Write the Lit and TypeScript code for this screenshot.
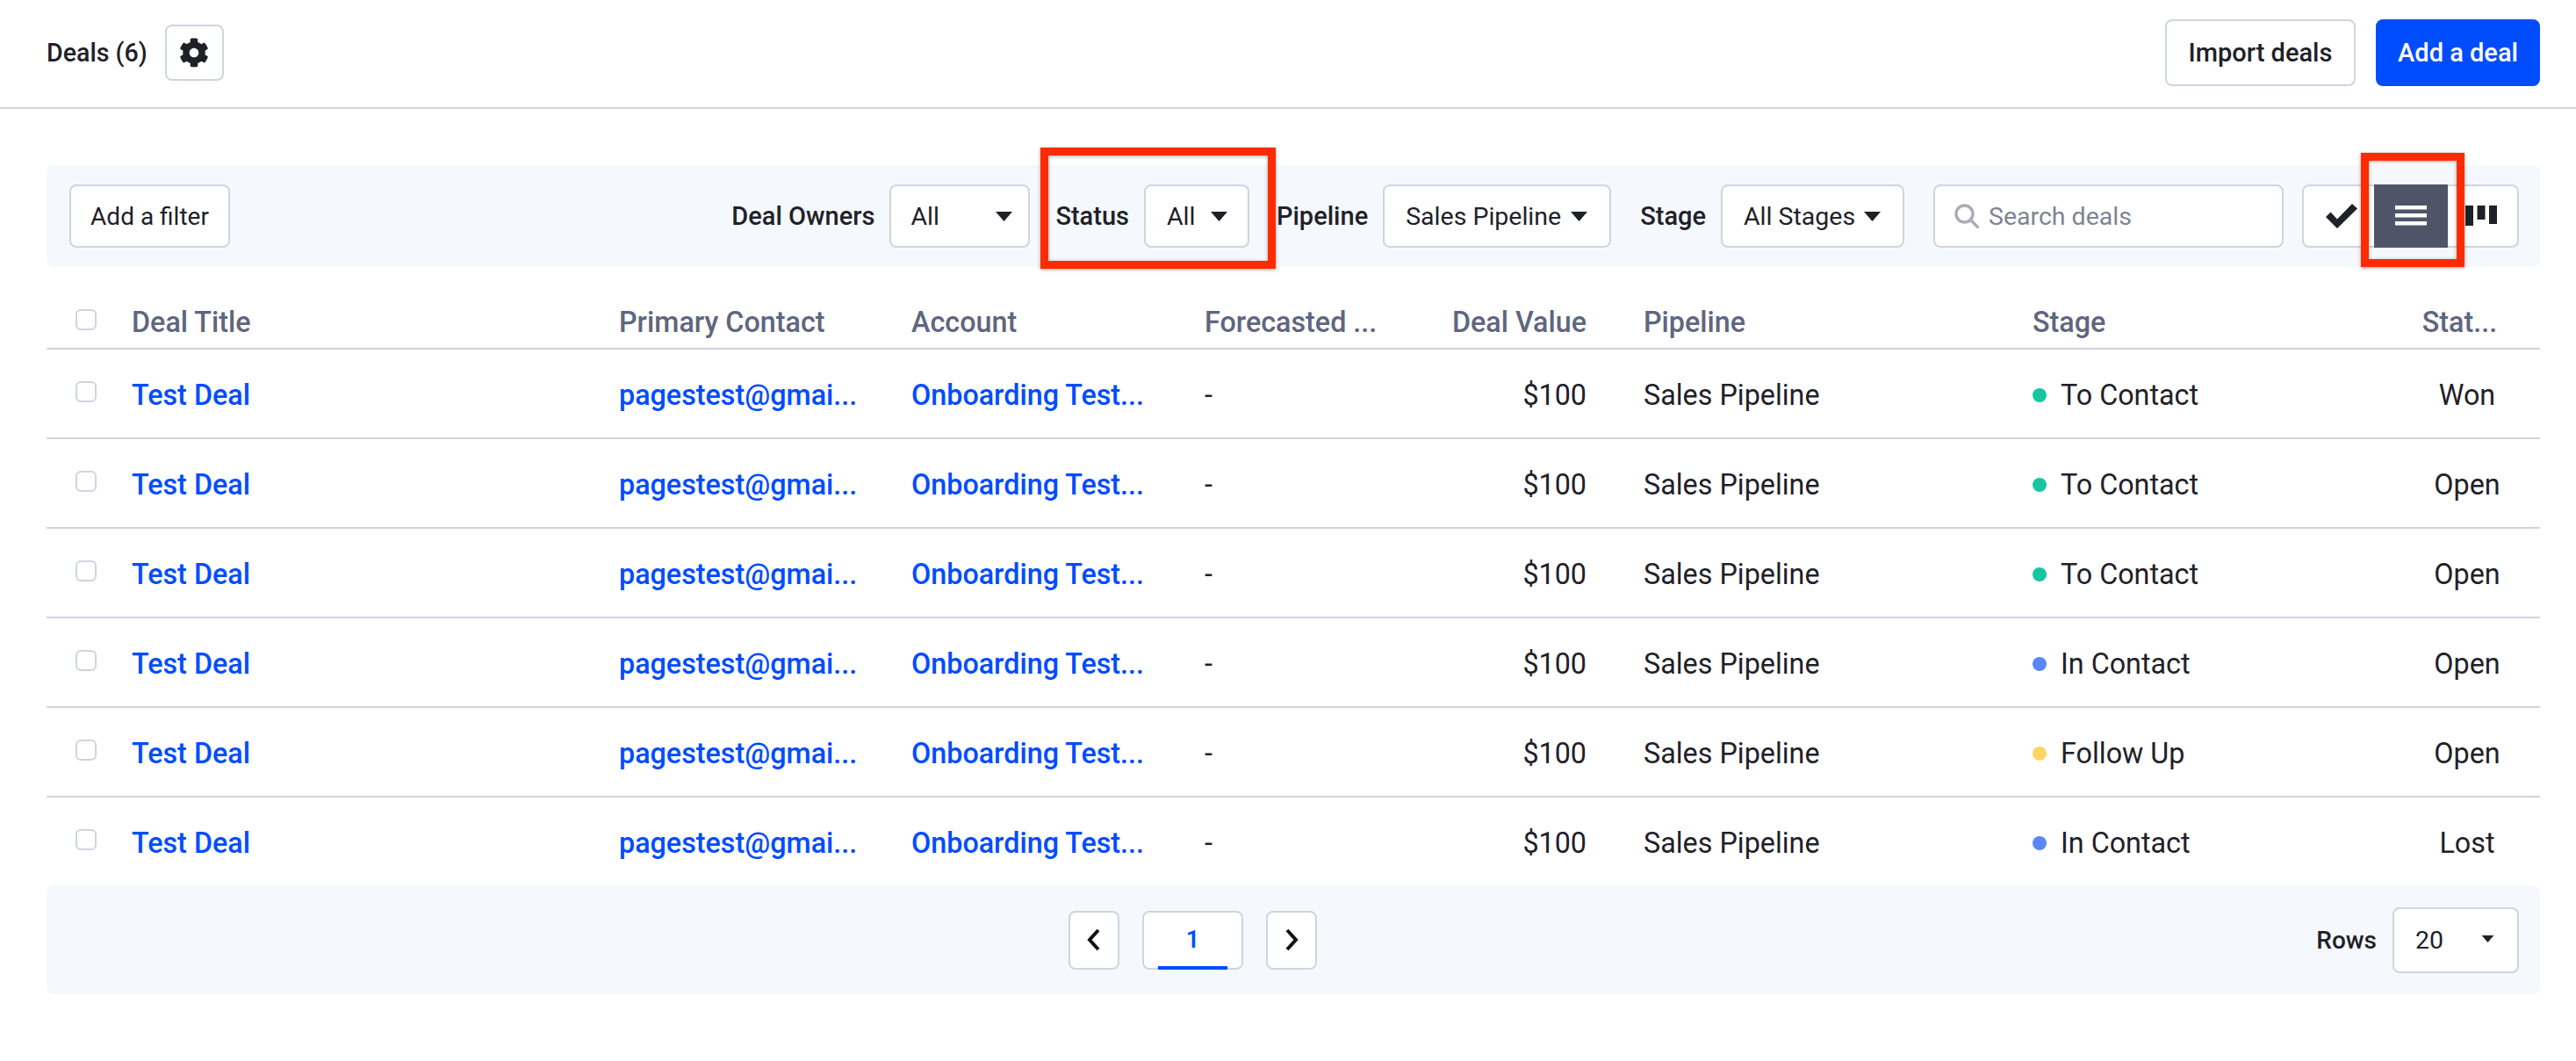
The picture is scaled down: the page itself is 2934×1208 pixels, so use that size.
import { LitElement, html, css, svg } from "lit";
import { customElement } from "lit/decorators.js";

const COG = "M487.4 315.7l-42.6-24.6c4.3-23.2 4.3-47 0-70.2l42.6-24.6c4.9-2.8 7.1-8.6 5.5-14-11.1-35.6-30-67.8-54.7-94.6-3.8-4.1-10-5.1-14.8-2.3L380.8 110c-17.9-15.4-38.5-27.3-60.8-35.1V25.8c0-5.6-3.9-10.5-9.4-11.7-36.7-8.2-74.3-7.8-109.2 0-5.5 1.2-9.4 6.1-9.4 11.7V75c-22.2 7.9-42.8 19.8-60.8 35.1L88.7 85.5c-4.9-2.8-11-1.9-14.8 2.3-24.7 26.7-43.6 58.9-54.7 94.6-1.7 5.4.6 11.2 5.5 14L67.3 221c-4.3 23.2-4.3 47 0 70.2l-42.6 24.6c-4.9 2.8-7.1 8.6-5.5 14 11.1 35.6 30 67.8 54.7 94.6 3.8 4.1 10 5.1 14.8 2.3l42.6-24.6c17.9 15.4 38.5 27.3 60.8 35.1v49.2c0 5.6 3.9 10.5 9.4 11.7 36.7 8.2 74.3 7.8 109.2 0 5.5-1.2 9.4-6.1 9.4-11.7v-49.2c22.2-7.9 42.8-19.8 60.8-35.1l42.6 24.6c4.9 2.8 11 1.9 14.8-2.3 24.7-26.7 43.6-58.9 54.7-94.6 1.5-5.5-.7-11.3-5.6-14.1zM256 336c-44.1 0-80-35.9-80-80s35.9-80 80-80 80 35.9 80 80-35.9 80-80 80z";

const caret = svg`<svg class="caret" viewBox="0 0 19 11"><path d="M0 0h19L9.5 11z" fill="#1f2129"/></svg>`;

type Deal = { stage: string; dot: string; status: string };
const DEALS: Deal[] = [
  { stage: "To Contact", dot: "green", status: "Won" },
  { stage: "To Contact", dot: "green", status: "Open" },
  { stage: "To Contact", dot: "green", status: "Open" },
  { stage: "In Contact", dot: "blue", status: "Open" },
  { stage: "Follow Up", dot: "yellow", status: "Open" },
  { stage: "In Contact", dot: "blue", status: "Lost" },
];

@customElement("app-root")
export class AppRoot extends LitElement {
  static styles = css`
    :host {
      display: block;
      position: relative;
      width: 100%;
      min-height: 1208px;
      background: #fff;
      color: #1f2129;
      font-family: Roboto, "Liberation Sans", sans-serif;
      font-size: 32.3px;
    }
    * { box-sizing: border-box; }
    .top {
      display: flex;
      align-items: center;
      height: 124px;
      padding: 0 41px 2px 53px;
      border-bottom: 2px solid #cfd4e0;
    }
    .title { font-size: 28.6px; font-weight: 500; margin-right: 20px; }
    .btn {
      display: flex;
      align-items: center;
      justify-content: center;
      background: #fff;
      border: 2px solid #cfd4e0;
      border-radius: 8px;
      font-size: 28px;
      white-space: nowrap;
      color: #1f2129;
    }
    .gear { width: 67px; height: 64px; }
    .gear svg { width: 34px; height: 34px; fill: #1f2129; }
    .spacer { flex: 1; }
    .import { width: 217px; height: 76px; font-weight: 500; margin-right: 23px; font-size: 29px; }
    .add { width: 187px; height: 76px; font-weight: 500; background: #004cff; border-color: #004cff; color: #fff; font-size: 29px; }
    main { padding: 64px 41px 0 53px; }
    .bar {
      display: flex;
      align-items: center;
      height: 116px;
      padding: 0 24px 0 26px;
      background: #f5f8fd;
      border-radius: 8px;
    }
    .filter { width: 183px; height: 72px; }
    .label { font-size: 29px; font-weight: 500; white-space: nowrap; margin-right: 17px; }
    .select {
      display: flex;
      align-items: center;
      height: 72px;
      padding: 0 25px 0 24px;
      background: #fff;
      border: 2px solid #cfd4e0;
      border-radius: 8px;
      font-size: 28.5px;
      white-space: nowrap;
      margin-right: 33px;
    }
    .select span { flex: 1; }
    .caret { width: 19px; height: 11px; flex: none; }
    .w-owner { width: 160px; padding: 0 18px 0 22px; margin-right: 29px; }
    .w-status { width: 120px; padding-right: 23px; margin-right: 31px; }
    .w-pipe { width: 260px; }
    .w-stage { width: 209px; }
    .search {
      display: flex;
      align-items: center;
      width: 399px;
      height: 72px;
      padding-left: 22px;
      background: #fff;
      border: 2px solid #cfd4e0;
      border-radius: 8px;
      color: #7d8494;
      font-size: 28.5px;
      margin-right: 21px;
    }
    .search svg { width: 28px; height: 28px; margin-right: 11px; }
    .toggle {
      display: flex;
      width: 247px;
      height: 72px;
      background: #fff;
      border: 2px solid #cfd4e0;
      border-radius: 8px;
    }
    .cell { display: flex; align-items: center; justify-content: center; }
    .c1 { width: 80px; padding-left: 6px; }
    .c2 { width: 84px; margin: -2px 0; background: #4f5569; }
    .c3 { flex: 1; padding-right: 3px; }
    .c1 svg { width: 36px; height: 28px; }
    .c2 svg, .c3 svg { width: 36px; height: 24px; }
    .row {
      display: grid;
      grid-template-columns: 97px 555px 333px 334px 250px 185px 508px 435px 143px;
      align-items: center;
      border-bottom: 2px solid #cfd4e0;
      height: 102px;
      padding-top: 4px;
    }
    .row > * { white-space: nowrap; }
    .row.head { height: 94px; padding-top: 34px; color: #5f667e; font-weight: 500; }
    .row.last { border-bottom: 0; height: 100px; }
    .check {
      display: block;
      width: 24px;
      height: 24px;
      margin: -9px 0 0 33px;
      background: #fff;
      border: 2px solid #cfd4e0;
      border-radius: 6px;
    }
    .head .check { margin-top: -6px; }
    .link { color: #004cff; font-weight: 500; }
    .right { text-align: right; }
    .pad { padding-left: 65px; }
    .stage { display: flex; align-items: center; }
    .dot { width: 16px; height: 16px; border-radius: 50%; margin-right: 16px; }
    .dot.green { background: #17c69e; }
    .dot.blue { background: #5a87f8; }
    .dot.yellow { background: #fcd565; }
    .status { text-align: center; padding-right: 23px; }
    .head .status { padding-right: 40px; }
    .foot {
      display: flex;
      align-items: center;
      height: 124px;
      padding: 0 24px 0 1164px;
      background: #f5f8fd;
      border-radius: 8px;
    }
    .pg { height: 67px; width: 58px; }
    .pg svg { width: 16px; height: 26px; }
    .page {
      position: relative;
      width: 115px;
      margin: 0 26px;
      color: #004cff;
      font-weight: 600;
      font-size: 27px;
    }
    .page::after {
      content: "";
      position: absolute;
      left: 16px;
      right: 16px;
      bottom: -2px;
      height: 4px;
      background: #004cff;
    }
    .rows { font-size: 28px; font-weight: 500; margin: 0 18px 0 auto; }
    .rowsel { width: 144px; height: 75px; margin: 0; padding-right: 26px; }
    .rowsel .caret { width: 15px; height: 8px; margin-top: -2px; }
    .mark {
      position: absolute;
      border: 9px solid #ff2b00;
      box-shadow: 0 1px 4px rgba(0,0,0,.35), inset 0 1px 4px rgba(0,0,0,.35);
      pointer-events: none;
    }
    .m1 { left: 1185px; top: 168px; width: 268px; height: 138px; }
    .m2 { left: 2689px; top: 174px; width: 118px; height: 130px; }
  `;

  private select(label: string, cls: string) {
    return html`<div class="select ${cls}"><span>${label}</span>${caret}</div>`;
  }

  private row(d: Deal, last: boolean) {
    return html`<div class="row ${last ? "last" : ""}">
      <span class="check"></span>
      <span class="link">Test Deal</span>
      <span class="link">pagestest@gmai...</span>
      <span class="link">Onboarding Test...</span>
      <span>-</span>
      <span class="right">$100</span>
      <span class="pad">Sales Pipeline</span>
      <span class="stage"><i class="dot ${d.dot}"></i>${d.stage}</span>
      <span class="status">${d.status}</span>
    </div>`;
  }

  render() {
    return html`
      <header class="top">
        <span class="title">Deals (6)</span>
        <div class="btn gear"><svg viewBox="0 0 512 512"><path d="${COG}"/></svg></div>
        <div class="spacer"></div>
        <div class="btn import">Import deals</div>
        <div class="btn add">Add a deal</div>
      </header>
      <main>
        <section class="bar">
          <div class="btn filter">Add a filter</div>
          <div class="spacer"></div>
          <span class="label">Deal Owners</span>${this.select("All", "w-owner")}
          <span class="label">Status</span>${this.select("All", "w-status")}
          <span class="label">Pipeline</span>${this.select("Sales Pipeline", "w-pipe")}
          <span class="label">Stage</span>${this.select("All Stages", "w-stage")}
          <div class="search">
            <svg viewBox="0 0 28 28" fill="none" stroke="#a9adb5" stroke-width="3.4">
              <circle cx="11.5" cy="11.5" r="9.5"/><path d="M18.5 18.5l8 8" stroke-linecap="round"/>
            </svg>
            Search deals
          </div>
          <div class="toggle">
            <div class="cell c1"><svg viewBox="0 0 36 28"><path d="M0 15l5.5-5.5 7.5 8L30 0l6 5.5L13 28z" fill="#1f2129"/></svg></div>
            <div class="cell c2"><svg viewBox="0 0 36 24" fill="#fff"><rect y="0" width="36" height="4.5"/><rect y="9" width="36" height="4.5"/><rect y="18" width="36" height="4.5"/></svg></div>
            <div class="cell c3"><svg viewBox="0 0 36 24" fill="#1f2129"><rect y="0" width="9" height="23"/><rect x="13.5" y="0" width="9" height="16"/><rect x="27" y="0" width="9" height="21"/></svg></div>
          </div>
        </section>
        <div class="row head">
          <span class="check"></span>
          <span>Deal Title</span>
          <span>Primary Contact</span>
          <span>Account</span>
          <span>Forecasted ...</span>
          <span class="right">Deal Value</span>
          <span class="pad">Pipeline</span>
          <span>Stage</span>
          <span class="status">Stat...</span>
        </div>
        ${DEALS.map((d, i) => this.row(d, i === DEALS.length - 1))}
        <section class="foot">
          <div class="btn pg"><svg viewBox="0 0 16 26" fill="none" stroke="#111" stroke-width="4"><path d="M13 2L3 13l10 11"/></svg></div>
          <div class="btn pg page">1</div>
          <div class="btn pg"><svg viewBox="0 0 16 26" fill="none" stroke="#111" stroke-width="4"><path d="M3 2l10 11L3 24"/></svg></div>
          <span class="rows">Rows</span>
          ${this.select("20", "rowsel")}
        </section>
      </main>
      <div class="mark m1"></div>
      <div class="mark m2"></div>
    `;
  }
}
